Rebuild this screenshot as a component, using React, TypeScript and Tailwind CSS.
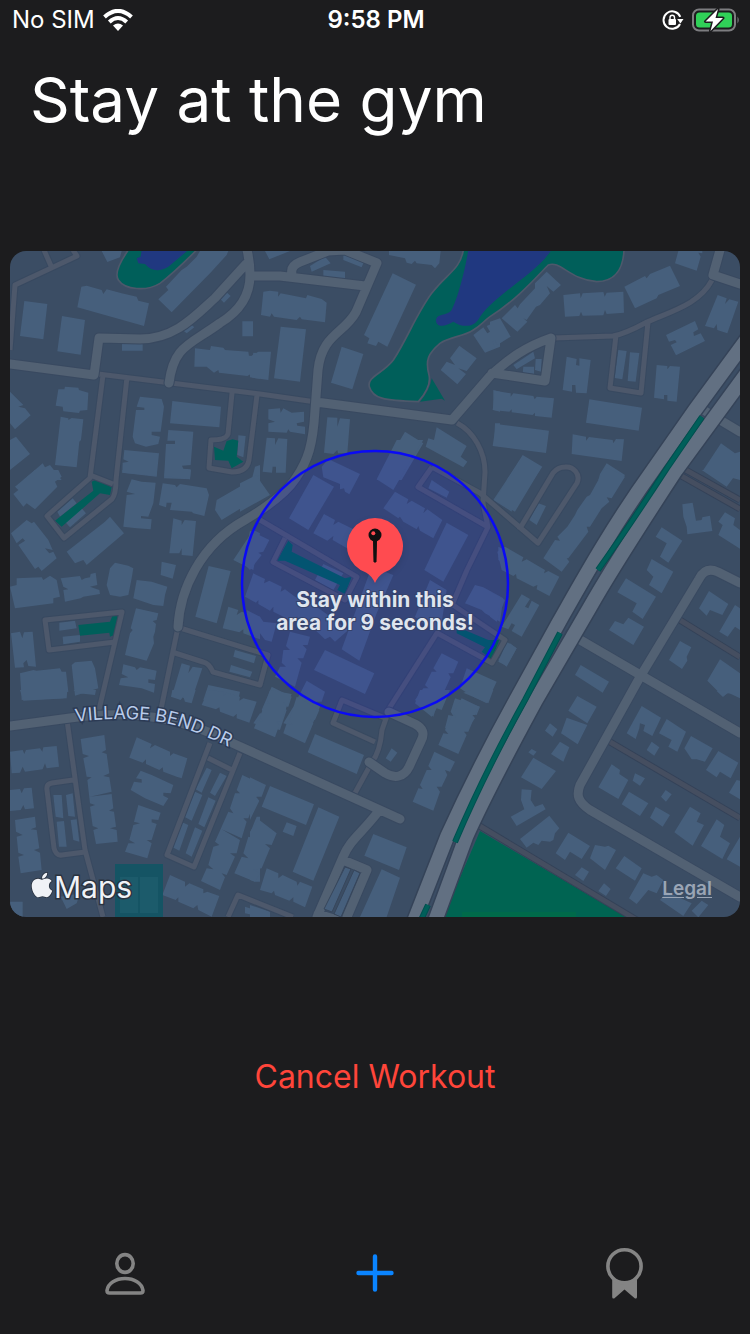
import { FaApple } from "react-icons/fa";

type Tile = { x: number; y: number; d: string };

/* Building footprints, grouped by survey tile. Each tile has its own origin and is drawn at one third scale. */
const buildings: Tile[] = [
  {
    x: 10,
    y: 250,
    d: `M43 153L112 162 100 268 30 258z M156 198L225 210 212 314 142 304z
    M214 110L230 107 275 120 280 132 290 118 335 130 380 140 385 152 417 160 402 228 202 172z
    M275 3L335 3 330 22 292 36z M570 3L655 3 650 15 600 70 485 187 445 148 475 120 468 110 515 60 530 50 560 20z
    M642 120L662 138 642 158 622 138z M533 215L553 232 530 250 515 238z M336 280L398 280 398 302 336 302z
    M697 214L729 214 729 259 697 259z
    M555 295L600 300 603 288 640 293 645 300 715 305 717 317 728 318 730 308 750 310 750 386 727 383 726 370 712 378 627 368 625 360 612 368 590 350 553 350z
    M145 418L163 418 165 410 205 413 207 420 235 428 232 480 210 482 207 489 160 484 158 470 137 467z
    M152 500L175 505 175 510 185 504 220 508 213 570 208 575 200 652 135 645z
    M390 440L455 447 462 470 452 545 425 545 425 555 450 560 445 582 408 590 375 580 368 560 378 480 403 480 403 473 380 470z
    M487 453L633 470 628 532 480 520z
    M475 540L550 545 542 645 516 647 520 656 542 658 540 688 462 685 468 582 495 582 495 572 472 572z
    M343 600L447 610 440 680 337 668 338 638 356 635 340 628z M0 425L40 465 25 470 45 475 62 496 15 538 0 520z
    M0 570L18 560 60 612 0 660z M40 690L98 640 105 652 120 645 155 690z M685 556L707 558 700 622 682 615z M735 650L750 645 750 690 725 690z`,
  },
  {
    x: 250,
    y: 250,
    d: `M45 3L120 3 58 28z M180 48L225 20 242 40 185 65z M280 15L300 8 342 35 335 52 280 30z M220 60L285 65 285 90 220 82z
    M417 3L572 3 568 40 555 55 545 45 500 40 495 32 485 42 470 38 465 25 417 15z M428 70L498 104 412 290 385 275 378 288 352 280 358 265 342 255z
    M40 125L60 122 85 125 84 140 92 130 168 145 172 135 215 147 230 158 225 217 155 208 150 200 140 210 72 200 65 190 60 200 33 195z
    M92 230L168 238 150 395 72 385z M0 320L25 305 63 305 55 390 0 382z M275 290L340 312 307 418 243 398z
    M55 478L90 475 92 488 100 475 125 488 162 485 162 515 140 520 142 527 165 530 165 553 120 545 115 538 110 548 55 545 55 520 75 515 55 508z
    M50 563L75 565 75 585 85 565 112 567 107 668 78 668 78 650 68 650 66 668 38 665z
    M232 502L262 503 262 530 270 505 300 508 292 610 264 610 262 600 250 612 222 608z
    M465 545L520 580 455 690 380 690z M560 532L650 588 632 620 652 635 640 652 527 590 535 565 552 570z
    M628 287L680 325 650 363 625 355 648 372 622 403 572 360 590 335 615 345 600 325z
    M670 255L700 232 712 250 720 245 710 228 750 210 750 290 705 308z M730 420L750 425 750 485 730 480z M735 520L750 520 750 590 732 585z`,
  },
  {
    x: 490,
    y: 250,
    d: `M0 215L30 205 62 260 22 285 15 270 8 275 15 292 0 300z M35 205L75 165 83 175 90 163 135 115 135 100 170 65 213 105 190 125 170 108 180 130 150 165 138 170 110 210 100 205 112 215 82 245z
    M220 135L270 130 272 145 278 130 340 126 344 140 350 128 400 125 402 188 350 192 345 180 340 196 278 197 273 185 268 198 225 200z
    M403 110L465 78 470 85 480 72 540 47 570 108 505 135 500 145 435 175z M565 3L637 3 637 10 625 8 632 20 620 62 555 40z
    M528 255L615 213 625 238 610 247 612 258 632 250 645 273 558 316 542 285 560 277 555 270 537 275z
    M683 135L710 145 705 162 718 148 745 155 712 250 682 240 680 222 672 235 645 228z
    M70 345L130 305 135 325 80 358z M137 327L155 327 153 365 135 360z M100 350L132 350 132 372 98 370z
    M230 320L260 327 258 345 268 347 268 325 302 330 290 430 258 428 256 405 246 405 246 425 218 420z
    M385 300L410 303 397 388 374 384z M420 307L448 309 437 395 413 393z
    M500 345L532 348 532 358 540 348 570 350 560 455 532 452 532 435 522 435 522 448 492 443z
    M15 422L62 430 62 440 70 430 130 438 134 448 140 440 192 445 185 503 135 498 135 488 128 495 65 487 65 478 58 485 8 480z
    M18 522L177 542 168 609 8 588z M298 448L456 473 446 542 288 518z M248 553L288 560 288 572 297 561 368 570 370 580 378 567 402 568 395 633 245 612z
    M98 615L157 650 130 690 50 690z M350 640L405 675 395 690 325 690 330 672z M693 580L735 610 750 605 750 690 640 660z`,
  },
  {
    x: 10,
    y: 470,
    d: `M75 0L145 0 155 20 135 35 142 50 75 118 50 100 40 110 10 72 25 60 15 50z
    M3 190L50 150 65 160 72 155 115 210 128 240 105 235 118 250 130 245 140 265 95 303 85 290 75 297 25 225 45 212 38 205 20 220z
    M142 125L188 85 200 100 150 140z M165 155L215 115 228 130 180 172z M170 245L285 155 300 140 342 190 230 285 220 270 195 280z
    M0 350L20 345 20 325 95 322 100 330 120 317 140 330 150 380 130 385 130 400 15 415z
    M152 325L210 318 215 330 225 325 240 322 242 312 257 308 262 345 240 350 268 360 270 372 220 380 212 385 165 395 160 360 175 358 160 350z
    M315 278L355 287 370 295 365 325 355 375 330 380 300 375 290 345 300 295z M380 330L425 335 472 350 465 375 460 408 430 405 370 385z
    M455 275L498 285 488 326 452 315z M365 28L395 35 437 38 430 100 415 140 393 138 393 145 425 148 422 178 380 175 340 170 350 75 375 72 350 65z
    M458 40L495 45 500 52 510 42 590 55 597 75 583 138 550 130 545 125 480 120 485 98 470 98 468 112 447 105z
    M490 145L515 152 515 165 524 150 558 153 548 258 515 255 515 235 508 250 478 250z M620 90L750 15 750 80 635 150 615 120z
    M337 0L440 0 440 18 337 8z M465 0L543 0 540 28 463 18z M596 288L662 303 620 460 556 440z M730 180L750 190 730 300 670 270z
    M655 410L685 420 680 435 695 425 750 440 750 508 700 490 700 478 688 487 638 475z
    M378 415L445 430 440 450 428 453 438 462 435 485 430 500 432 520 410 572 345 555 360 490 368 480 362 475z
    M148 458L195 452 200 475 148 482z M158 500L210 495 210 515 160 523z M3 490L30 485 37 505 42 487 68 485 78 590 55 588 50 570 40 580 42 592 15 593z
    M30 610L70 600 80 602 150 595 155 605 168 605 175 665 160 670 160 685 35 690z M185 585L195 577 245 572 255 595 265 655 195 677z
    M340 583L375 592 380 600 390 592 440 602 435 630 415 628 415 638 435 642 432 668 395 655 327 645 332 625 355 622 335 612z
    M675 540L738 558 732 580 670 560z M663 585L727 605 720 622 658 605z
    M515 580L540 587 535 610 548 590 577 595 545 690 518 683 525 668 510 665 510 685 485 680z M595 645L690 665 685 690 580 690z`,
  },
  {
    x: 240,
    y: 440,
    d: `M0 130L50 105 62 125 90 165 0 215z M245 80L265 57 360 102 328 163 315 155 312 145 300 148 300 132 250 112z M220 105L282 140 205 270 147 235z
    M470 0L550 0 515 55 460 150 410 118z M575 120L628 155 620 173 565 145z
    M465 155L505 178 500 192 515 182 555 205 550 220 562 208 607 240 580 295 540 272 535 258 530 268 490 245 480 230 475 235 430 205z
    M620 248L685 285 610 425 553 390z M252 222L285 240 280 255 295 245 345 270 330 330 278 300 280 288 262 302 220 280z
    M30 272L88 300 70 335 55 338 65 345 30 390 10 370z M40 400L75 417 72 430 88 422 125 440 122 455 135 448 165 470 150 540 100 515 100 500 90 512 55 492 55 480 48 488 15 470z
    M20 510L60 530 70 545 110 550 95 605 75 600 60 580 50 590 20 580z M250 372L310 400 280 450 225 420z
    M395 380L460 405 410 520 358 662 305 628z M165 470L230 500 325 570 285 605 270 590 255 598 215 560 150 530z
    M255 630L403 700 375 762 222 690z M150 575L210 590 203 615 188 615 200 628 190 655 172 655 185 668 165 740 105 710 120 680 138 680 125 668 130 630 150 630 138 618z
    M570 420L620 450 600 580 570 560 565 545 555 555 525 530z M705 435L730 442 790 475 780 545 735 520 725 510 675 490z
    M605 640L655 665 640 700 625 700 632 712 610 760 595 755 600 768 580 830 525 780 550 745 565 745 555 735 575 695 590 695 580 685z
    M680 685L770 725 740 790 700 770 695 758 690 765 660 745z M645 775L720 800 710 825 695 822 705 835 680 870 615 865 625 825 640 828 632 815z
    M810 610L830 625 800 680 775 660z M840 60L835 90 815 215 760 180z M775 320L840 350 840 400 775 360z
    M95 740L155 770 145 800 130 800 140 810 120 870 40 850 60 820 75 822 65 810z M200 722L255 755 245 785 230 785 240 800 210 870 130 850 160 800 175 800 165 790z`,
  },
  {
    x: 490,
    y: 470,
    d: `M75 0L150 0 75 125 12 90z M145 100L168 108 140 165 118 150z
    M340 0L355 -6 405 20 365 85 350 82 358 95 335 115 300 170 290 170 295 185 235 265 230 265 238 275 215 305 160 265 195 210 210 212 202 200 232 170 255 135 262 120 290 80 300 75 325 30z
    M45 230L100 262 95 275 110 268 165 300 162 310 175 303 208 320 178 378 140 358 142 345 130 350 80 325 78 312 70 318 35 300 22 245z
    M95 373L120 387 105 410 115 415 125 392 148 405 95 500 65 483 75 465 65 460 55 478 35 470z
    M0 365L45 390 35 415 25 415 30 430 20 455 0 440z M50 515L80 535 50 588 25 575z M635 0L740 0 740 10 710 50z
    M577 103L608 98 618 152 635 150 637 142 660 137 667 183 592 193 590 170 580 140z
    M705 127L735 145 730 165 750 180 750 236 685 195 698 165 685 155z M515 172L577 212 535 278 510 260 530 220 497 200z
    M485 267L550 305 515 370 477 345 490 320 470 300z M408 325L498 380 458 447 427 425 440 400 382 367z
    M375 453L400 463 415 443 462 470 430 525 357 480z M657 363L715 402 697 435 660 420 650 437 627 415z
    M735 405L750 415 750 480 735 470 713 500 688 485z M570 513L604 532 590 560 592 572 576 597 537 570z
    M690 568L750 610 750 672 710 670 700 680 652 632z M272 585L357 635 338 668 255 615z`,
  },
  {
    x: 10,
    y: 690,
    d: `M30 0L172 0 170 25 40 32z M190 0L258 0 255 15 205 10z
    M0 185L38 180 43 192 48 180 90 175 97 185 100 172 140 168 147 230 110 235 105 220 98 238 45 245 38 230 30 248 5 250z
    M0 300L30 297 35 310 42 295 65 293 72 355 45 358 40 345 32 360 0 363z
    M15 390L75 380 78 412 62 418 80 420 88 475 72 480 90 488 95 540 32 550 25 500 42 495 25 488 20 440 38 435 18 425z
    M212 147L283 135 288 180 275 187 290 192 298 250 280 258 298 262 305 305 240 320 305 312 310 355 297 362 312 365 318 410 300 415 320 420 323 455 258 462 250 420 265 415 248 408 240 350 255 345 240 340 232 270 245 262 230 260 220 205 237 198 218 192z
    M380 142L425 162 420 175 435 165 480 185 480 198 490 190 532 205 515 265 500 260 460 245 458 232 448 240 408 222 408 208 398 218 358 203z
    M392 242L425 255 490 285 482 310 460 308 460 317 475 325 460 348 405 325 362 300 372 275 395 278 395 268 378 265z
    M385 345L452 368 445 390 425 388 425 397 440 402 425 450 410 450 425 460 412 505 345 485 355 460 375 460 358 450 370 405 390 400 372 395z
    M590 233L605 240 575 308 557 298z M630 248L650 258 615 318 600 308z M555 305L577 315 545 392 523 380z M595 322L617 332 583 412 565 402z
    M513 395L535 405 508 482 488 472z M555 412L577 422 545 500 527 490z M130 315L155 315 160 385 137 380z M168 315L188 310 195 380 175 378z
    M140 395L162 393 170 470 147 470z M182 390L200 388 208 455 190 450z
    M697 255L750 280 740 320 722 320 735 330 715 385 700 385 710 395 695 445 635 418 690 450 680 490 660 490 675 500 650 555 635 550 645 562 630 600 573 573 590 535 610 538 595 525 610 470 628 465 615 455 635 410 655 365 670 370 660 355 675 310 690 310 680 300z
    M740 380L750 380 750 575 735 575 673 550 695 500 715 505 700 490 715 440 735 445 720 430z
    M480 555L525 575 525 590 538 580 580 598 580 610 592 605 628 618 605 680 565 660 562 645 550 655 505 635 505 622 497 630 457 615z
    M152 620L210 610 200 640 170 657z M705 650L750 665 750 680 705 670z M0 635L38 635 38 680 0 680z
    M487 0L557 0 545 40 525 35 520 20 512 30 483 20z M595 0L640 5 640 18 650 8 690 20 688 32 700 25 740 35 718 98 680 85 680 72 670 80 630 65 628 52 618 58 575 45z`,
  },
  {
    x: 250,
    y: 690,
    d: `M60 0L125 12 115 40 100 38 110 50 95 95 80 95 88 105 75 142 12 115 22 90 38 95 30 80 45 40 60 42 50 30z
    M140 20L208 60 195 90 180 88 190 100 165 160 100 130 110 100 128 105 118 90z M195 132L342 195 320 252 173 187z
    M425 175L442 188 422 215 407 205z M510 0L600 0 575 60 560 55 545 80 495 40z
    M635 25L688 50 675 75 665 75 670 90 655 125 642 125 650 135 625 192 565 165 580 130 595 132 585 120 605 80 618 82 610 70z
    M553 185L615 215 600 245 585 240 592 255 575 290 560 290 570 305 550 362 488 335 505 295 518 297 510 285 530 240 545 240 535 228z
    M0 262L48 285 35 320 18 320 28 332 0 390z M60 288L192 343 168 405 35 350z M205 352L268 380 190 572 128 545z M110 397L140 408 130 438 98 425z
    M25 388L80 430 65 465 45 462 60 475 35 535 10 540 30 550 15 575 0 570 0 425z
    M50 535L85 550 85 565 98 555 140 575 142 587 150 575 187 590 165 652 130 635 130 622 118 632 75 615 72 602 65 610 30 600z
    M370 432L470 472 447 540 343 497z M395 538L450 563 410 681 330 681z M0 645L60 665 60 681 0 681z M665 0L730 0 715 40 640 8z`,
  },
  {
    x: 490,
    y: 690,
    d: `M262 18L320 50 292 100 235 62z M230 83L292 105 263 163 213 130z M180 100L202 118 188 140 165 122z M125 177L140 185 130 197 115 187z
    M210 155L238 172 220 215 183 192z M130 203L198 243 155 297 93 262z M95 298L125 300 122 330 135 350 158 342 167 358 80 408 62 380 103 358 93 330z
    M178 377L208 415 195 430 190 450 180 455 155 452 145 465 130 458 110 473 90 447z
    M455 48L513 83 487 138 460 123 465 105 450 100 448 115 437 147 410 130z M530 87L588 125 562 185 535 170 545 150 507 130z
    M603 138L668 175 645 215 620 208 605 208 583 175z M685 183L745 218 722 265 690 245 680 262 648 240z M485 155L508 172 493 197 470 180z
    M740 270L750 272 750 328 717 308z M365 223L390 240 388 252 415 270 385 327 325 292z M435 250L465 265 450 287 428 272z
    M527 300L545 313 528 335 513 320z M417 305L475 340 450 378 395 343z M497 350L540 375 518 410 480 383z
    M600 350L632 370 620 395 642 405 608 467 553 427z M680 388L703 405 690 440 720 460 697 507 633 468z M750 440L750 530 710 508z
    M235 428L300 468 275 507 240 485 225 510 197 490z M315 465L345 470 355 467 378 480 345 540 300 505z M403 498L455 535 435 572 377 535z
    M460 550L485 560 500 555 520 570 500 610 475 600 440 642 417 625z M510 630L530 605 605 640 580 678z M635 632L655 645 625 682 605 662z
    M275 532L297 545 280 573 255 555z M342 580L362 597 348 618 325 603z M680 3L715 0 750 0 750 25 715 8 698 20z`,
  },
];

/* Narrow service roads and footpaths. */
const lanes = `M10 350L15 285 77 256 73 250M51 266L44 250M98 374L260 394 316 402
M103 375L90 478 47 516 64 538 112 499Q116 494 116 480L127 377M90 475L113 484
M232 393L228 434Q226 440 211 440L209 468 232 472Q247 472 249 460L257 395
M553 338L613 336Q625 334 647 322C675 310 700 303 712 280M616 335L610 388 641 393 648 322
M457 423C474 432 485 452 485 472L483 503 488 527 467 570 452 605M432 467L418 487 488 527M432 467L480 493 538 543 577 483C581 474 573 466 565 467Q558 467 553 473L519 530
M260 520L357 577 345 600 273 562 285 538M453 605L505 640 492 663 437 633 390 707 382 730Q380 752 372 762L355 793
M385 718L342 700 333 723 375 742M180 628L268 655 260 685 213 672Q209 663 203 662L175 653M178 627L160 714
M98 714L122 612 45 620 49 650 115 642M67 720L77 793 85 850 103 917M73 780L52 783Q46 784 47 790L54 848Q56 856 62 855L85 852
M210 743L167 855 194 867 240 753M208 758L232 770M228 917L238 895 293 917`;

const streets = `M10 364L94 375 99 338 140 339C175 339 195 316 215 298L246 264
M169 383C174 345 190 345 220 323C245 308 250 290 250 275Q250 262 247 250M250 276L280 276 365 286
M292 274Q290 266 300 262L328 251 345 250 377 263 356 312C344 334 322 334 318 370L315 410C313 445 308 460 296 478C285 495 262 510 245 520C200 545 180 590 178 627
M316 402L452 420 490 376C510 358 525 347 551 338L545 381 492 373
M10 726L70 718C130 710 180 716 230 742L400 819M389 712L415 724Q427 730 421 741L409 767C404 777 395 779 385 773L369 762
M378 812C360 835 350 840 343 857L317 917M343 860L367 870 347 917M318 914L350 924M570 634L740 733
M740 583L718 572C709 568 703 571 699 579L640 677 580 785C576 795 578 802 590 810L740 897M720 250L713 275 740 284M700 408L740 432`;

const darkRoads = `M684 469L740 500M678 474L740 509M675 617L740 657M605 739L740 818M478 825L640 922`;

const highway = `M750 335L695 410 653 470C610 530 580 585 559 622L516 700C490 747 467 793 447 837L413 924
M750 369L676 470C640 525 611 570 590 607L536 700C510 748 487 790 466 837L434 924`;

const medians = `M702 417L667 468Q630 525 598 570M560 633L525 700C500 745 475 795 455 842M428 905L421 920`;

function NeighborhoodMap() {
  return (
    <svg viewBox="10 251 730 666" className="block h-auto w-full" role="img" aria-label="Map of the gym area">
      <rect x="10" y="251" width="730" height="666" fill="#3b4d64" />
      <g fill="#465f7c">
        {buildings.map((tile) => (
          <path key={`${tile.x}-${tile.y}`} d={tile.d} transform={`translate(${tile.x} ${tile.y}) scale(.33333)`} />
        ))}
      </g>

      <g fill="#005f5a">
        <g stroke="#4d586b" strokeWidth="5">
          <path transform="translate(10 250) scale(.33333)" d="M355 0C320 50 315 75 325 90C345 120 410 125 450 100C490 70 530 30 560 0z" />
          <path
            transform="translate(250 250) scale(.33333)"
            d="M640 0C630 60 590 70 545 130C500 190 470 270 430 330C400 370 350 380 358 410C368 445 400 452 505 455Q545 410 537 375C525 330 535 310 570 280C600 260 640 260 670 240C690 228 700 215 720 200C800 150 860 80 895 45C930 30 960 90 1040 95C1100 95 1120 50 1122 0z"
          />
        </g>
        <path transform="translate(250 250) scale(.33333)" d="M510 455L575 446 585 452 545 385Q540 420 510 455z" />
        <path transform="translate(10 250) scale(.33333)" d="M612 590L640 602 650 573 668 568 685 572 680 620 700 635 665 655 655 632 615 630z" />
        <path transform="translate(10 470) scale(.33333)" d="M245 35L260 28 305 52 300 75 270 70 155 170 135 152 250 62z M205 465L300 455 308 435 325 435 312 495 300 500 298 488 210 497z" />
        <path transform="translate(240 440) scale(.33333)" d="M145 302L158 315 155 335 315 415 335 410 315 462 292 450 300 435 135 362 110 362z M650 560L745 600 778 600 755 658 725 635 735 622 650 580z" />
      </g>
      <g fill="#203880">
        <path transform="translate(10 250) scale(.33333)" d="M395 0L392 20 380 25 385 40 405 42C425 65 450 65 475 50L535 0z" />
        <path
          transform="translate(250 250) scale(.33333)"
          d="M655 0C645 60 625 140 605 180C590 200 560 188 558 212C560 235 590 228 610 215C640 235 675 232 690 200C740 130 860 70 904 0z"
        />
      </g>
      <path d="M480 831L626 917H443z" fill="#006452" />
      <path d="M462 912H576V917H462z" fill="#006a4a" />
      <path d="M115 864H163V917H115z" fill="#155464" />
      <path d="M120 877H138V913H120zM140 877H158V913H140z" fill="#1c5b6b" />

      <g fill="none" strokeLinejoin="round">
        <path d={lanes} stroke="#384960" strokeWidth="7" />
        <path d={lanes} stroke="#4d586b" strokeWidth="5" />
        <path d={darkRoads} stroke="#344258" strokeWidth="7" />
        <path d={darkRoads} stroke="#454e60" strokeWidth="5" />
        <path d={streets} stroke="#394960" strokeWidth="11" strokeLinecap="round" />
        <path d={streets} stroke="#526173" strokeWidth="9" strokeLinecap="round" />
        <path d={highway} stroke="#354358" strokeWidth="17" />
        <path d={highway} stroke="#627082" strokeWidth="14" />
        <path d={medians} stroke="#00504f" strokeWidth="6" />
        <path d={medians} stroke="#005f5a" strokeWidth="4" />
      </g>
      <path d="M345 867L351 869 332 912 324 909z M354 870L360 873 341 917 334 914z" fill="#465f7c" stroke="#37465b" />

      <circle cx="375" cy="584" r="133" fill="#1414ff" fillOpacity=".14" stroke="#0a0af5" strokeWidth="2.5" />

      <path id="village-bend" d="M76 722C100 718 140 718 160 722C185 726 210 738 250 757" fill="none" />
      <text fill="#b9cbea" stroke="#2c3b55" strokeWidth="3" paintOrder="stroke" className="font-['Inter',sans-serif] text-[18px]">
        <textPath href="#village-bend">VILLAGE BEND DR</textPath>
      </text>
    </svg>
  );
}

function Pin() {
  return (
    <svg viewBox="0 0 60 68" className="h-[68px] w-[60px] drop-shadow-md" aria-hidden="true">
      <path d="M30 67Q27 60 21 56.500A28 28 0 1 1 39 56.500Q33 60 30 67z" fill="#ff4b50" />
      <path d="M28.500 24H31.500L31 46H29z" fill="#101010" stroke="#101010" strokeLinejoin="round" />
      <circle cx="30" cy="19" r="6.500" fill="#101010" />
      <circle cx="28.300" cy="17.300" r="2" fill="#ff4b50" />
    </svg>
  );
}

function StatusBar() {
  return (
    <div className="grid h-10 grid-cols-3 items-center pl-3 pr-2.5 text-[24px] leading-none">
      <div className="flex items-center gap-2">
        <span>No SIM</span>
        <svg viewBox="0 0 30 22" className="h-[22px] w-[30px]" aria-label="Wi-Fi">
          <g fill="none" stroke="#fff" strokeWidth="4">
            <path d="M1.500 8Q15-4.300 28.500 8" />
            <path d="M6.300 13Q15 5 23.700 13" />
          </g>
          <path d="M10 16.500Q15 12.500 20 16.500L15 22z" fill="#fff" />
        </svg>
      </div>
      <time className="text-center font-semibold">9:58 PM</time>
      <div className="flex items-center justify-end gap-2">
        <svg viewBox="0 0 22 20" className="h-5 w-[22px]" aria-label="Rotation locked">
          <path d="M18 14A8.700 8.700 0 1 1 18.300 6.800" fill="none" stroke="#fff" strokeWidth="2" />
          <path d="M15.200 9H21.500L18.400 13.500z" fill="#fff" />
          <rect x="6.500" y="9" width="7.500" height="6" rx="1" fill="#fff" />
          <path d="M8 9.500V7.500Q8 5.300 10.250 5.300T12.500 7.500V9.500" fill="none" stroke="#fff" strokeWidth="1.400" />
        </svg>
        <svg viewBox="0 0 48 24" className="h-6 w-12" aria-label="Battery charging">
          <rect x="1" y="1.500" width="42" height="21" rx="6" fill="none" stroke="#7d7d80" strokeWidth="2" />
          <rect x="4" y="4.500" width="36" height="15" rx="3.500" fill="#30d158" />
          <path d="M45.500 8.500Q48 12 45.500 15.500z" fill="#7d7d80" />
          <path d="M26 1L13.500 13.500H21L18.500 23 31 10H23.500z" fill="#fff" stroke="#1c1c1e" strokeWidth="3" strokeLinejoin="round" paintOrder="stroke" />
        </svg>
      </div>
    </div>
  );
}

export default function App() {
  return (
    <div className="flex min-h-screen flex-col bg-[#1c1c1e] font-['Inter',sans-serif] text-white">
      <StatusBar />
      <main className="flex flex-col items-center px-2.5">
        <h1 className="mb-28 mt-5 w-full px-5 text-[62px] leading-[79px]">Stay at the gym</h1>
        <section className="relative w-full overflow-hidden rounded-2xl" aria-label="Workout area">
          <NeighborhoodMap />
          <div className="absolute bottom-1/2 left-1/2 -translate-x-1/2">
            <Pin />
          </div>
          <p className="absolute left-1/2 top-1/2 mt-1 -translate-x-1/2 whitespace-nowrap text-center text-[21px] font-bold leading-[23px] text-[#dfe5ee] [paint-order:stroke] [-webkit-text-stroke:2px_#35426b]">
            Stay within this
            <br />
            area for 9 seconds!
          </p>
          <div className="absolute bottom-3 left-5 flex items-center text-[30px] leading-9 text-[#f0f2f6]">
            <FaApple className="mb-1 h-7 w-6 overflow-visible stroke-[#2a3340] stroke-[30px] [paint-order:stroke]" aria-label="Apple" />
            <span className="[paint-order:stroke] [-webkit-text-stroke:3px_#2a3340]">Maps</span>
          </div>
          <a href="#legal" className="absolute bottom-4 right-7 text-[19px] font-semibold leading-6 text-[#9aa5b5] underline underline-offset-2">
            Legal
          </a>
        </section>
        <button type="button" className="mt-32 px-6 py-2 text-[32px] leading-[48px] text-[#ff453a]">
          Cancel Workout
        </button>
      </main>
      <nav className="mt-auto grid h-[122px] grid-cols-3 text-[#848484]" aria-label="Main">
        <button type="button" aria-label="Profile" className="flex items-center justify-center">
          <svg viewBox="0 0 42 54" className="h-[54px] w-[42px]" fill="none" stroke="currentColor" strokeWidth="3.600" aria-hidden="true">
            <ellipse cx="21" cy="17.500" rx="8.200" ry="8.900" />
            <path d="M5.500 47H36.500Q39 47 39 44.500C38 37 30 32.500 21 32.500S4 37 3 44.500Q3 47 5.500 47z" />
          </svg>
        </button>
        <button type="button" aria-label="New workout" className="flex items-center justify-center text-[#0a84ff]">
          <svg viewBox="0 0 38 38" className="size-[38px]" stroke="currentColor" strokeWidth="4.400" strokeLinecap="round" aria-hidden="true">
            <path d="M19 2.500V35.500M2.500 19H35.500" />
          </svg>
        </button>
        <button type="button" aria-label="Awards" className="flex items-center justify-center">
          <svg viewBox="0 0 38 52" className="h-[52px] w-[38px]" aria-hidden="true">
            <path d="M6.200 32Q19 41 31 32V50Q31 52 29 51.500L18.500 42.500 8.200 51.500Q6.200 52 6.200 50z" fill="currentColor" />
            <circle cx="18.500" cy="19.300" r="16.600" fill="#1c1c1e" stroke="currentColor" strokeWidth="3.600" />
          </svg>
        </button>
      </nav>
    </div>
  );
}
